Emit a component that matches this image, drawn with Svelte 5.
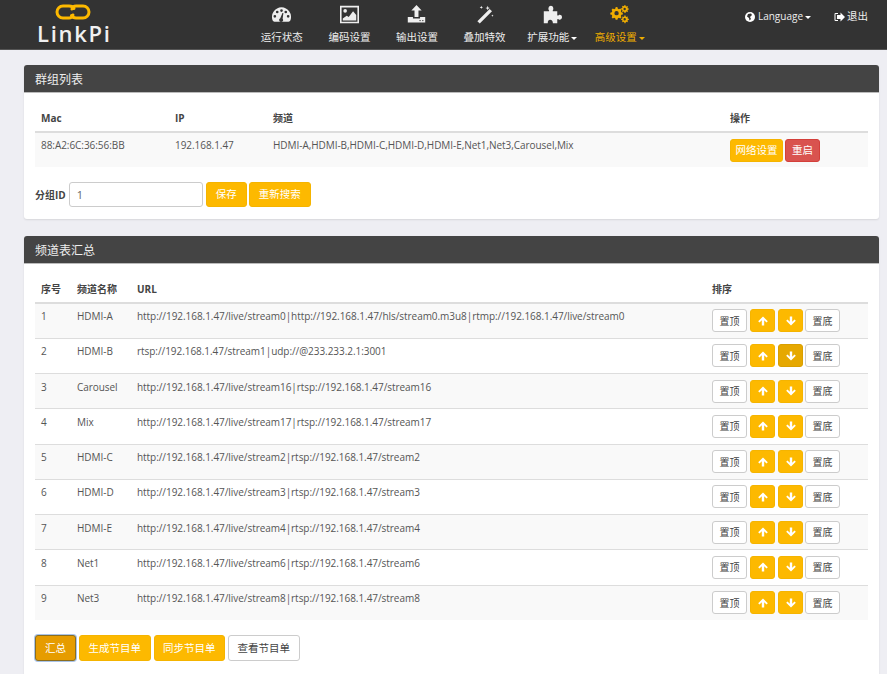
<script>
  const navItems = [
    { label: '运行状态', icon: 'gauge' },
    { label: '编码设置', icon: 'picture' },
    { label: '输出设置', icon: 'upload' },
    { label: '叠加特效', icon: 'wand' },
    { label: '扩展功能', icon: 'puzzle', caret: true },
    { label: '高级设置', icon: 'cogs', caret: true, active: true }
  ];
  const channels = [
    ['HDMI-A', 'http://192.168.1.47/live/stream0|http://192.168.1.47/hls/stream0.m3u8|rtmp://192.168.1.47/live/stream0'],
    ['HDMI-B', 'rtsp://192.168.1.47/stream1|udp://@233.233.2.1:3001'],
    ['Carousel', 'http://192.168.1.47/live/stream16|rtsp://192.168.1.47/stream16'],
    ['Mix', 'http://192.168.1.47/live/stream17|rtsp://192.168.1.47/stream17'],
    ['HDMI-C', 'http://192.168.1.47/live/stream2|rtsp://192.168.1.47/stream2'],
    ['HDMI-D', 'http://192.168.1.47/live/stream3|rtsp://192.168.1.47/stream3'],
    ['HDMI-E', 'http://192.168.1.47/live/stream4|rtsp://192.168.1.47/stream4'],
    ['Net1', 'http://192.168.1.47/live/stream6|rtsp://192.168.1.47/stream6'],
    ['Net3', 'http://192.168.1.47/live/stream8|rtsp://192.168.1.47/stream8']
  ];
</script>

<nav class="navbar">
  <div class="logo">
    <svg class="chain" width="36" height="16" viewBox="0 0 36 16" fill="none" stroke="#fdb900" stroke-width="3" stroke-linecap="round">
      <path d="M19 4.500C18 2.500 16 2 14 2H8a6 6 0 0 0 0 12h6c2 0 3.500-1 4-3" />
      <path d="M17 5c.5-2 2-3 4-3h7a6 6 0 0 1 0 12h-7c-2 0-3.500-.5-4.500-2.500" />
    </svg>
    <span class="brand">LinkPi</span>
  </div>
  <ul class="menu">
    {#each navItems as item}
      <li class:active={item.active}>
        <svg class="nav-icon" width="24" height="24" viewBox="0 0 24 24" fill="currentColor">
          {#if item.icon === 'gauge'}
            <path transform="translate(-2.400 -.6) scale(1.2)" fill-rule="evenodd" d="M12 3a10 10 0 0 1 9.400 13.500c-.3.900-1.100 1.500-2 1.500H4.600c-.9 0-1.700-.6-2-1.500A10 10 0 0 1 12 3zM7.500 6.500a1.400 1.400 0 1 0 0 2.800 1.400 1.400 0 0 0 0-2.800zM12 5a1.400 1.400 0 1 0 0 2.800A1.400 1.400 0 0 0 12 5zm4.500 1.500a1.400 1.400 0 1 0 0 2.800 1.400 1.400 0 0 0 0-2.800zM5 11a1.400 1.400 0 1 0 0 2.800A1.400 1.400 0 0 0 5 11zm14 0a1.400 1.400 0 1 0 0 2.800 1.400 1.400 0 0 0 0-2.800zM13 9l-2.300 5.500a2 2 0 1 0 2.500.6L14 9z" />
          {:else if item.icon === 'picture'}
            <path fill-rule="evenodd" d="M0 1h24v22H0zM2 3v18h20V3z" />
            <circle cx="6.500" cy="7.500" r="2.300" />
            <path d="M3.500 19.500v-2.500l5-3.500 2.500 1.500 5.500-7 4 4.500v7z" />
          {:else if item.icon === 'upload'}
            <path d="M12 0l6.500 7h-4v8h-5V7h-4z" />
            <path fill-rule="evenodd" d="M1 15h6.500v2h9v-2H23v7H1zm15.500 3.800a.9.900 0 1 0 0 1.800.9.900 0 0 0 0-1.800zm3.500 0a.9.900 0 1 0 0 1.800.9.900 0 0 0 0-1.800z" />
          {:else if item.icon === 'wand'}
            <path d="M18.500 5l3 3L6 23.500l-3-3z" />
            <path d="M16 1l.8 2 2 .8-2 .8-.8 2-.8-2-2-.8 2-.8zM8 1l.5 1.300L10 3l-1.500.7L8 5l-.5-1.300L6 3l1.500-.7zM22 12l.4 1.100 1.100.4-1.100.4-.4 1.100-.4-1.100-1.100-.4 1.100-.4z" />
          {:else if item.icon === 'puzzle'}
            <path d="M1 8h6c1 0 1-1 .3-1.800C6.400 5 7 1 10 1s3.600 4 2.700 5.200C12 7 12 8 13 8h5v4.500c0 1 1 1 1.800.3 1.200-.9 4.200-.3 4.200 2.700s-3 3.600-4.200 2.700c-.8-.7-1.800-.7-1.800.3V23h-5.500c0-3-1.300-4.500-3.500-4.500S6 20 6 23H1z" />
          {:else}
            <path fill-rule="evenodd" d="M9 6l1.300.3.5 2 1.500.8 1.900-.9 1.600 1.600-.9 1.900.7 1.500 2 .6v2.400l-2 .6-.7 1.500.9 1.900-1.600 1.600-1.900-.9-1.500.7-.6 2H7.800l-.6-2-1.500-.7-1.900.9-1.600-1.600.9-1.900-.7-1.500-2-.6v-2.400l2-.6.7-1.500-.9-1.900 1.600-1.600 1.900.9 1.500-.8.500-2zM9 11.500a3 3 0 1 0 0 6 3 3 0 0 0 0-6z" transform="translate(0 -3) scale(.92)" />
            <path fill-rule="evenodd" d="M18.500 0l1.100.3.2 1.200 1.100.5 1-.6.800.8-.6 1 .5 1.100 1.200.2v1.300l-1.200.2-.5 1.100.6 1-.8.8-1-.6-1.100.5-.2 1.200h-1.300l-.2-1.200-1.100-.5-1 .6-.8-.8.6-1-.5-1.100-1.200-.2V4.100l1.200-.2.500-1.100-.6-1 .8-.8 1 .6 1.100-.5.200-1.200zm0 3.500a1.500 1.500 0 1 0 0 3 1.500 1.500 0 0 0 0-3z" />
            <path fill-rule="evenodd" d="M18.500 13l1.100.3.2 1.200 1.100.5 1-.6.800.8-.6 1 .5 1.100 1.200.2v1.300l-1.200.2-.5 1.100.6 1-.8.8-1-.6-1.100.5-.2 1.200h-1.300l-.2-1.200-1.100-.5-1 .6-.8-.8.6-1-.5-1.100-1.200-.2v-1.300l1.200-.2.500-1.100-.6-1 .8-.8 1 .6 1.100-.5.200-1.200zm0 3.500a1.500 1.500 0 1 0 0 3 1.500 1.500 0 0 0 0-3z" />
          {/if}
        </svg>
        <span class="nav-label">{item.label}{#if item.caret}<i class="caret"></i>{/if}</span>
      </li>
    {/each}
  </ul>
  <div class="right">
    <span class="right-item lang">
      <svg width="10" height="10" viewBox="0 0 10 10"><circle cx="5" cy="5" r="5" fill="#fff" /><path d="M3 2l3-.5L7 3 5 5 6 7 4.500 8.500 4 6 2 4.500z" fill="#333" /></svg>
      <span>Language<i class="caret"></i></span>
    </span>
    <span class="right-item logout">
      <svg width="11" height="10" viewBox="0 0 11 10" fill="#fff"><path d="M4 1H1.500A1 1 0 0 0 .5 2v6a1 1 0 0 0 1 1H4V8H1.500V2H4z" /><path d="M6.500 .5L11 5 6.500 9.500V7H3V3h3.500z" /></svg>
      退出
    </span>
  </div>
</nav>

<main class="page">
  <section class="panel first">
    <h2 class="panel-title">群组列表</h2>
    <div class="panel-body">
      <table class="group-table">
        <thead>
          <tr><th class="c-mac">Mac</th><th class="c-ip">IP</th><th class="c-chan">频道</th><th>操作</th></tr>
        </thead>
        <tbody>
          <tr>
            <td>88:A2:6C:36:56:BB</td>
            <td>192.168.1.47</td>
            <td>HDMI-A,HDMI-B,HDMI-C,HDMI-D,HDMI-E,Net1,Net3,Carousel,Mix</td>
            <td class="actions"><button class="btn yellow">网络设置</button><button class="btn red">重启</button></td>
          </tr>
        </tbody>
      </table>
      <div class="group-form">
        <span class="form-label">分组ID</span>
        <input class="group-input" value="1" />
        <button class="btn yellow form-btn">保存</button>
        <button class="btn yellow form-btn">重新搜索</button>
      </div>
    </div>
  </section>

  <section class="panel second">
    <h2 class="panel-title">频道表汇总</h2>
    <div class="panel-body">
      <table class="chan-table">
        <thead>
          <tr><th class="c-no">序号</th><th class="c-name">频道名称</th><th class="c-url">URL</th><th>排序</th></tr>
        </thead>
        <tbody>
          {#each channels as ch, i}
            <tr>
              <td>{i + 1}</td>
              <td>{ch[0]}</td>
              <td>{ch[1]}</td>
              <td class="sort">
                <button class="btn white">置顶</button>
                <button class="btn yellow arrow" aria-label="up">
                  <svg width="10" height="10" viewBox="0 0 10 10" fill="#fff"><path d="M5 .5L9.800 5.300 8.500 6.600 6.200 4.300V9.500H3.800V4.300L1.500 6.600.2 5.300z" /></svg>
                </button>
                <button class="btn yellow arrow" class:pressed={i === 1} aria-label="down">
                  <svg width="10" height="10" viewBox="0 0 10 10" fill="#fff"><path d="M5 9.500L.2 4.700 1.500 3.400 3.800 5.700V.5h2.400v5.200l2.300-2.300 1.300 1.300z" /></svg>
                </button>
                <button class="btn white">置底</button>
              </td>
            </tr>
          {/each}
        </tbody>
      </table>
      <div class="footer-btns">
        <button class="btn summary">汇总</button>
        <button class="btn yellow">生成节目单</button>
        <button class="btn yellow">同步节目单</button>
        <button class="btn white">查看节目单</button>
      </div>
    </div>
  </section>
</main>

<style>
  :global(body) {
    background: #eeeef3;
    font-family: "Open Sans", "Noto Sans CJK SC", sans-serif;
    font-size: 10.5px;
    color: #555;
    overflow: hidden;
  }
  .navbar {
    height: 49px;
    background: #333;
    border-bottom: 1px solid #555;
    display: flex;
    color: #fff;
    position: relative;
  }
  .logo {
    width: 147px;
    padding-left: 37px;
    box-sizing: border-box;
    display: flex;
    flex-direction: column;
    align-items: flex-start;
  }
  .chain { margin: 4px 0 0 18px; }
  .brand {
    font-family: "Open Sans", sans-serif;
    font-size: 22px;
    font-weight: 600;
    letter-spacing: 1.700px;
    line-height: 24px;
    color: #f0f0f0;
    margin-top: 1px;
  }
  .menu {
    list-style: none;
    margin: 0 0 0 101px;
    padding: 0;
    display: flex;
  }
  .menu li {
    width: 67.600px;
    display: flex;
    flex-direction: column;
    align-items: center;
    color: #eee;
    padding-top: 5px;
  }
  .menu li.active { color: #f0ad00; }
  .menu li.active .caret { border-top-color: #f0ad00; }
  .nav-icon { display: block; width: 19px; height: 19px; }
  .nav-label {
    margin-top: 5px;
    line-height: 16px;
    white-space: nowrap;
  }
  .caret {
    display: inline-block;
    width: 0;
    height: 0;
    margin-left: 2px;
    vertical-align: middle;
    border-top: 3px solid #fff;
    border-left: 3px solid transparent;
    border-right: 3px solid transparent;
  }
  .right {
    position: absolute;
    right: 19px;
    top: 9px;
    display: flex;
    gap: 23px;
    line-height: 15px;
  }
  .right-item {
    display: flex;
    align-items: center;
    gap: 3px;
    color: #eee;
  }
  .lang { font-size: 10px; }
  .logout { gap: 2px; }

  .page { padding: 15px 8px 0 24px; }
  .panel {
    background: #fff;
    border-radius: 3px;
    box-shadow: 0 1px 2px rgba(0, 0, 0, .1);
  }
  .first { height: 154px; margin-bottom: 17px; }
  .second { height: 460px; }
  .panel-title {
    margin: 0;
    height: 28px;
    background: #444;
    border-radius: 3px 3px 0 0;
    color: #eee;
    font-size: 12px;
    font-weight: 400;
    line-height: 29px;
    padding-left: 11px;
    border-bottom: 1px solid #bbb;
    box-sizing: border-box;
  }
  .panel-body { padding: 0 11px; }
  table {
    width: 833px;
    border-collapse: collapse;
    table-layout: fixed;
  }
  th {
    text-align: left;
    color: #444;
    font-size: 10px;
    font-weight: 700;
    padding: 0 6px;
    border-bottom: 2px solid #ddd;
    box-sizing: border-box;
  }
  td {
    padding: 0 6px;
    color: #555;
    font-size: 10px;
    letter-spacing: -.05px;
    box-sizing: border-box;
  }
  .group-table { margin-top: 14px; }
  .group-table th { height: 25px; padding-bottom: 3px; }
  .group-table tbody tr { background: #f9f9f9; height: 35px; }
  .group-table td { padding-bottom: 10px; }
  .c-mac { width: 134px; }
  .c-ip { width: 98px; }
  .c-chan { width: 457px; }
  .group-table td.actions { padding: 0 6px; }
  .btn {
    font-family: inherit;
    font-size: 10.5px;
    border-radius: 3px;
    border: 1px solid transparent;
    padding: 0;
    height: 23px;
    line-height: 1;
    cursor: pointer;
  }
  .actions .btn { height: 23px; margin-right: 2px; vertical-align: middle; }
  .actions .yellow { width: 53px; }
  .actions .red { width: 35px; }
  .yellow { background: #fdb900; color: #fff; border-color: #f5b400; }
  .red { background: #d9534f; color: #fff; border-color: #d43f3a; }
  .white { background: #fff; color: #444; border-color: #ccc; }

  .group-form {
    display: flex;
    align-items: center;
    margin-top: 15px;
    gap: 2px;
  }
  .form-label { font-weight: 700; color: #444; font-size: 10px; margin-right: 1px; }
  .group-input {
    width: 134px;
    height: 25px;
    box-sizing: border-box;
    border: 1px solid #ccc;
    border-radius: 3px;
    padding: 0 7px;
    font-family: inherit;
    font-size: 11px;
    color: #666;
    margin-right: 1px;
  }
  .form-btn { height: 25px; padding: 0 9px; }

  .chan-table { margin-top: 15px; }
  .chan-table th { height: 24px; padding-bottom: 4px; }
  .chan-table tbody tr { height: 35.250px; border-bottom: 1px solid #ddd; }
  .chan-table tbody tr:nth-child(odd) { background: #f9f9f9; }
  .chan-table tbody tr:last-child { border-bottom: 0; }
  .chan-table tbody td { padding-bottom: 9px; }
  .chan-table tbody td.sort { padding: 0 0 0 6px; }
  .c-no { width: 36px; }
  .c-name { width: 60px; }
  .c-url { width: 575px; }
  .sort { white-space: nowrap; font-size: 0; }
  .sort .btn { height: 23px; vertical-align: middle; margin-right: 3px; font-size: 10px; }
  .sort .btn:last-child { margin-right: 0; margin-left: -1px; }
  .sort .white { width: 35px; }
  .sort .arrow { width: 25px; }
  .arrow svg { display: block; margin: 0 auto; }
  .pressed { background: #e6a800; border-color: #d99f00; }

  .footer-btns {
    display: flex;
    gap: 3px;
    margin-top: 15px;
  }
  .footer-btns .btn { height: 26px; padding: 0 8.500px; }
  .footer-btns .summary { padding: 0 9px; }
  .summary {
    background: #e69c00;
    color: #fff;
    border-color: #8a6d20;
    box-shadow: 0 0 0 1px #a9c4ea;
  }
</style>
